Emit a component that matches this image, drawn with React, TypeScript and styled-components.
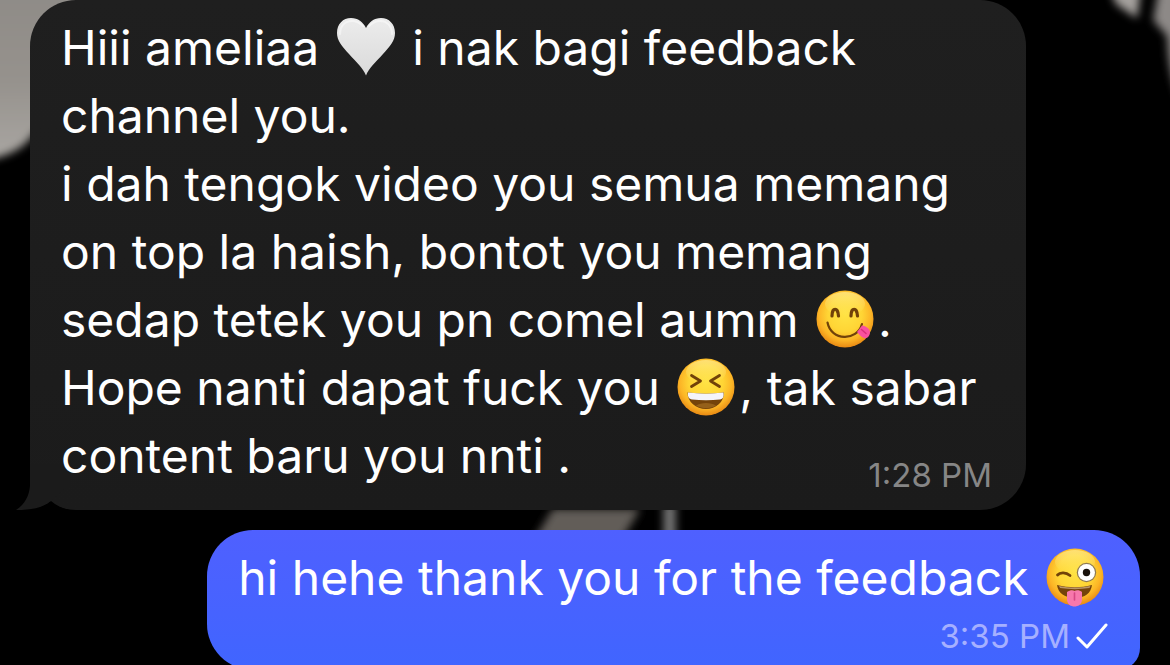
import React from "react";
import styled, { createGlobalStyle } from "styled-components";

const GlobalStyle = createGlobalStyle`
  * { box-sizing: border-box; }
  body {
    margin: 0;
    background: #000;
    font-family: Inter, "Liberation Sans", sans-serif;
    overflow: hidden;
  }
`;

const Chat = styled.main`
  position: relative;
  min-height: 100vh;
  overflow: hidden;
`;

const Wallpaper = styled.svg`
  position: absolute;
  inset: 0;
  width: 100%;
  height: 100%;
`;

const Messages = styled.div`
  position: relative;
  display: flex;
  flex-direction: column;
  gap: 20px;
  padding: 0 30px;
`;

const Bubble = styled.article<{ $own?: boolean }>`
  position: relative;
  display: flex;
  flex-direction: column;
  align-self: ${(p) => (p.$own ? "flex-end" : "stretch")};
  margin-right: ${(p) => (p.$own ? "0" : "114px")};
  padding: ${(p) => (p.$own ? "14px 32px 14px 31px" : "14px 34px 15px 31px")};
  border-radius: ${(p) => (p.$own ? "46px 46px 22px 46px" : "46px")};
  background: ${(p) =>
    p.$own ? "linear-gradient(#4f60ff, #4065ff)" : "linear-gradient(#1f1f1f, #1b1b1b)"};
`;

const Tail = styled.svg`
  position: absolute;
  left: -14px;
  bottom: 0;
  width: 54px;
  height: 46px;
`;

const Text = styled.p`
  position: relative;
  margin: 0;
  color: #fff;
  font-size: 48px;
  line-height: 68px;
  white-space: nowrap;
`;

const Meta = styled.footer<{ $overlap?: boolean }>`
  position: relative;
  display: flex;
  align-items: center;
  justify-content: flex-end;
  gap: 6px;
  height: 40px;
  margin-top: ${(p) => (p.$overlap ? "-35px" : "4px")};
  color: ${(p) => (p.$overlap ? "#868686" : "#a6b0ff")};
  font-size: 33px;
  line-height: 40px;
`;

const EmojiSvg = styled.svg`
  width: 60px;
  height: 60px;
  margin: -8px 3px;
  vertical-align: -4px;
`;

const Check = styled.svg`
  width: 32px;
  height: 26px;
`;

function Heart() {
  return (
    <EmojiSvg viewBox="0 0 60 60" role="img" aria-label="white heart">
      <defs>
        <linearGradient id="heart" x1="0" y1="0" x2="0" y2="1">
          <stop offset="0" stopColor="#ececec" />
          <stop offset="1" stopColor="#dadada" />
        </linearGradient>
      </defs>
      <path
        d="M30 58.500C27 51 21 46 13 37C6 29 1 24 1 16C1 7 7 1 15 1C22 1 27 5 30 11C33 5 38 1 45 1C53 1 59 7 59 16C59 24 54 29 47 37C39 46 33 51 30 58.500Z"
        fill="url(#heart)"
      />
      <path
        d="M4 17C4 9 9 4 16 4C20 4 24 6 27 9M33 9C36 6 40 4 44 4C51 4 56 9 56 17"
        fill="none"
        stroke="#fafafa"
        strokeWidth="2"
        strokeLinecap="round"
        opacity=".6"
      />
    </EmojiSvg>
  );
}

function Face({ id, label, children }: { id: string; label: string; children: React.ReactNode }) {
  return (
    <EmojiSvg viewBox="0 0 60 60" role="img" aria-label={label}>
      <defs>
        <radialGradient id={id} cx=".5" cy=".42" r=".6">
          <stop offset="0" stopColor="#ffe344" />
          <stop offset=".5" stopColor="#ffd535" />
          <stop offset=".76" stopColor="#fcb526" />
          <stop offset="1" stopColor="#e58210" />
        </radialGradient>
        <linearGradient id={`${id}-shine`} x1="0" y1="0" x2="0" y2="1">
          <stop offset="0" stopColor="#fff8b0" stopOpacity=".55" />
          <stop offset="1" stopColor="#fff080" stopOpacity="0" />
        </linearGradient>
      </defs>
      <circle cx="30" cy="30" r="28.500" fill={`url(#${id})`} />
      <ellipse cx="30" cy="15" rx="20" ry="12" fill={`url(#${id}-shine)`} />
      {children}
    </EmojiSvg>
  );
}

function Yum() {
  return (
    <Face id="yum" label="face savoring food">
      <g fill="none" stroke="#714209" strokeLinecap="round">
        <path d="M17 27C17 18 23 18 23.500 27M36 27C36 18 42 18 42.500 27" strokeWidth="3.200" />
        <path d="M12.500 33.500C16 52 42 53 47 35" strokeWidth="2.200" />
      </g>
      <path d="M42 43L47 36.500C51 37 55 40 55 43C55 47 52 50 49 49C46 48 44 45 42 43Z" fill="#f9519f" />
      <path d="M46.500 40.500L51 44.500" stroke="#d9307b" strokeWidth="1.500" strokeLinecap="round" />
    </Face>
  );
}

function Laugh() {
  return (
    <Face id="laugh" label="grinning squinting face">
      <path
        d="M15.500 18.500L24.500 24L15.500 29.500M43.500 18.500L34.500 24L43.500 29.500"
        fill="none"
        stroke="#714209"
        strokeWidth="2.800"
        strokeLinecap="round"
        strokeLinejoin="round"
      />
      <path d="M11.500 35.500C24 37 36 37 48 35.500C48 45 40 52 30 52C20 52 11.500 45 11.500 35.500Z" fill="#75430a" />
      <path d="M12 35.500C24 37 36 37 47.500 35.500C48 40 47 42 44 42.500C35 43.500 25 43.500 16 42.500C13 42 11.500 40 12 35.500Z" fill="#f4f4fa" />
      <path d="M20 48.500C25 45 35 45 40 48.500C34 52 26 52 20 48.500Z" fill="#95601a" />
    </Face>
  );
}

function Wink() {
  return (
    <Face id="wink" label="winking face with tongue">
      <path d="M12.500 28C15 25 21 25 25 28.500" fill="none" stroke="#714209" strokeWidth="2.800" strokeLinecap="round" />
      <circle cx="41.500" cy="25.500" r="9.700" fill="#8d7a55" />
      <circle cx="41.500" cy="25.500" r="8.500" fill="#fff" />
      <circle cx="41.500" cy="25.500" r="3.700" fill="#18120c" />
      <path d="M12 38C24 41 36 41 47 38C46 46 40 51 30 51C20 51 13 46 12 38Z" fill="#75430a" />
      <path d="M14 39C25 41 35 41 45.500 39L44.500 41C35 42.500 25 42.500 15 41Z" fill="#b9966a" />
      <path d="M22 45C25 43 28 43 29.500 44C31 43 35 43 37 45V53C36.500 57.500 33 59.500 29.500 59.500C26 59.500 22.500 57.500 22 53Z" fill="#f778ac" />
      <path d="M29.500 46V53" stroke="#d74785" strokeWidth="1.600" strokeLinecap="round" />
    </Face>
  );
}

export default function App() {
  return (
    <>
      <GlobalStyle />
      <Chat>
        <Wallpaper viewBox="0 0 1170 665" preserveAspectRatio="xMidYMid slice" aria-hidden="true">
          <defs>
            <filter id="soft" x="-20%" y="-20%" width="140%" height="140%">
              <feGaussianBlur stdDeviation="4" />
            </filter>
            <linearGradient id="wall" x1="0" y1="0" x2="0" y2="1">
              <stop offset="0" stopColor="#8c8985" />
              <stop offset=".6" stopColor="#96928d" />
              <stop offset="1" stopColor="#aaa7a3" />
            </linearGradient>
          </defs>
          <g filter="url(#soft)">
            <path d="M-40 -40H110V50L32 140Q14 160 -40 162Z" fill="url(#wall)" />
            <path d="M1103 -20H1138L1133 18L1112 4Z" fill="#a5a19e" />
            <path d="M1156 -20H1190V120Q1164 90 1163 36L1149 20Z" fill="#8d8987" />
            <path d="M553 505H640L622 535H535Z" fill="#625d59" />
            <path d="M663 500H675V540H663Z" fill="#777" />
          </g>
        </Wallpaper>
        <Messages>
          <Bubble>
            <Tail viewBox="0 0 54 46" aria-hidden="true">
              <path d="M14 0V22C13 32 9 40 0 46C14 46 27 44 35 37L54 20V0Z" fill="#1b1b1b" />
              <path d="M16 46Q28 44 35 37Q43 44 54 46Z" fill="#000" />
            </Tail>
            <Text>
              Hiii ameliaa <Heart /> i nak bagi feedback
              <br />
              channel you.
              <br />
              i dah tengok video you semua memang
              <br />
              on top la haish, bontot you memang
              <br />
              sedap tetek you pn comel aumm <Yum />.
              <br />
              Hope nanti dapat fuck you <Laugh />, tak sabar
              <br />
              content baru you nnti .
            </Text>
            <Meta $overlap>
              <time>1:28 PM</time>
            </Meta>
          </Bubble>
          <Bubble $own>
            <Text>
              hi hehe thank you for the feedback <Wink />
            </Text>
            <Meta>
              <time>3:35 PM</time>
              <Check viewBox="0 0 32 26" role="img" aria-label="Sent">
                <path d="M2 15L11 24L30 2" fill="none" stroke="#fff" strokeWidth="3" strokeLinecap="round" strokeLinejoin="round" />
              </Check>
            </Meta>
          </Bubble>
        </Messages>
      </Chat>
    </>
  );
}
